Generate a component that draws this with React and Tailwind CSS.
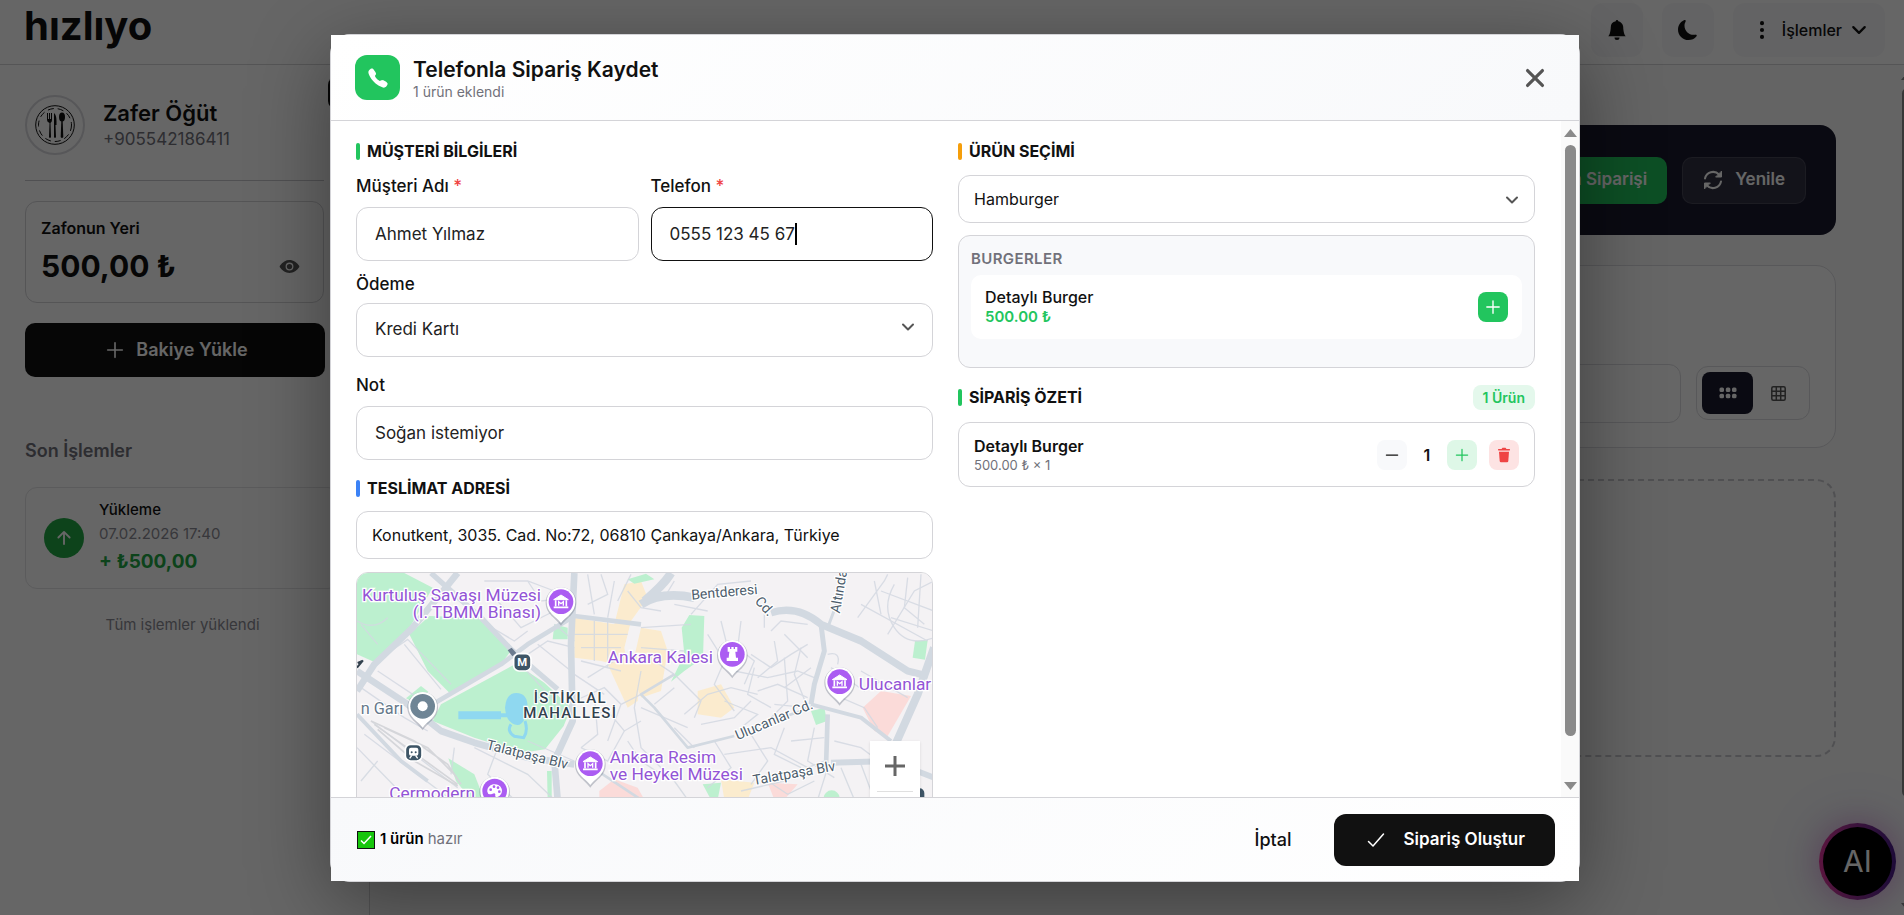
import React from "react";
import { IoAdd, IoArrowUp, IoCall, IoCheckmark, IoClose, IoEye, IoRemove } from "react-icons/io5";
import { BsBellFill, BsMoonFill, BsThreeDotsVertical } from "react-icons/bs";

function Chevron({ className }) {
  return (
    <svg viewBox="0 0 14 14" className={className} aria-hidden="true">
      <path d="M2 4.500 7 9.500 12 4.500" fill="none" stroke="currentColor" strokeWidth="2" strokeLinecap="round" strokeLinejoin="round" />
    </svg>
  );
}

function RefreshIcon() {
  return (
    <svg viewBox="0 0 20 20" className="size-5" fill="none" stroke="currentColor" strokeWidth="2" strokeLinecap="round" aria-hidden="true">
      <path d="M2 8.500A8.200 8.200 0 0 1 16 4.500M18 11.500A8.200 8.200 0 0 1 4 15.500" />
      <path d="M18.500 1.500V7H13z" fill="currentColor" strokeWidth="1" strokeLinejoin="round" />
      <path d="M1.500 18.500V13H7z" fill="currentColor" strokeWidth="1" strokeLinejoin="round" />
    </svg>
  );
}

function DotsGridIcon() {
  return (
    <svg viewBox="0 0 18 12" className="h-3 w-[18px]" fill="currentColor" aria-hidden="true">
      {[0.5, 6.8, 13].map((x) => (
        <g key={x}>
          <rect x={x} y=".5" width="4.500" height="4.500" rx="1.500" />
          <rect x={x} y="6.800" width="4.500" height="4.500" rx="1.500" />
        </g>
      ))}
    </svg>
  );
}

function TableGridIcon() {
  return (
    <svg viewBox="0 0 15 15" className="size-[15px]" fill="none" stroke="currentColor" strokeWidth="1.500" aria-hidden="true">
      <rect x=".8" y=".8" width="13.400" height="13.400" rx="1.500" />
      <path d="M5.300 1V14M9.700 1V14M1 5.300H14M1 9.700H14" />
    </svg>
  );
}

function TrashIcon() {
  return (
    <svg viewBox="0 0 14 16" className="h-4 w-[14px]" fill="currentColor" aria-hidden="true">
      <path d="M4.500 2 5.500.8H8.500L9.500 2H12.500Q13 2 13 2.800T12.500 3.600H1.500Q1 3.600 1 2.800T1.500 2z" />
      <path d="M2 4.800H12L11.300 14Q11.200 15.200 10 15.200H4Q2.800 15.200 2.700 14z" />
    </svg>
  );
}

function PlateLogo() {
  return (
    <svg viewBox="0 0 60 60" className="size-[60px]" aria-hidden="true">
      <circle cx="30" cy="30" r="29" fill="none" stroke="#d9d9de" strokeWidth="2" />
      <circle cx="30" cy="30" r="19.3" fill="none" stroke="#111" strokeWidth="1" />
      <circle cx="30" cy="30" r="16.5" fill="none" stroke="#111" strokeWidth="1" strokeDasharray="6 4" />
      <g fill="#111" stroke="none">
        <path d="M22 18h1v6h1v-6h1v6h1v-6h1v7q0 2-1.500 3l.5 14q-1 2-2 0l.5-14Q22 27 22 25z" />
        <path d="M29 18q2.500 2 2.500 8v4h-1l.5 12q-1 2-2 0z" />
        <ellipse cx="37" cy="22" rx="3" ry="4.500" />
        <path d="M36.300 26h1.400l.6 16q-1.300 2-2.600 0z" />
      </g>
    </svg>
  );
}

function Topbar() {
  return (
    <header className="flex h-[65px] shrink-0 items-start justify-between border-b border-[#d4d4d8] bg-white pl-6 pr-[19px] pt-[3px]">
      <a href="#" className="text-[40px] font-bold leading-[46px] text-[#111]">
        hızlıyo
      </a>
      <div className="flex gap-[19px]">
        <button aria-label="Bildirimler" className="flex h-[54px] w-[52px] items-center justify-center rounded-xl bg-[#f8f8f9] text-[#111]">
          <BsBellFill size={20} />
        </button>
        <button aria-label="Koyu tema" className="flex h-[54px] w-[52px] items-center justify-center rounded-xl bg-[#f8f8f9] text-[#111]">
          <BsMoonFill size={20} />
        </button>
        <button className="flex h-[54px] items-center gap-[9px] rounded-xl bg-[#f8f8f9] px-[18px] text-base font-medium text-[#111]">
          <BsThreeDotsVertical size={22} />
          İşlemler
          <Chevron className="size-4" />
        </button>
      </div>
    </header>
  );
}

function Sidebar() {
  return (
    <aside className="relative w-[370px] shrink-0 border-r border-[#d4d4d8] bg-white pl-[25px] pr-[29px] pt-[30px]">
      <div className="absolute left-[328px] top-3 h-8 w-8 rounded-lg bg-[#111]" />
      <div className="mr-4 flex items-center gap-[18px] border-b border-[#c8c8cc] pb-[25px]">
        <PlateLogo />
        <div>
          <h2 className="text-[22px] font-semibold leading-7 text-[#111]">Zafer Öğüt</h2>
          <p className="text-[17px] leading-6 text-[#71717a]">+905542186411</p>
        </div>
      </div>
      <section className="mr-4 mt-5 rounded-xl border border-[#d4d4d8] py-[14px] pl-[15px] pr-3">
        <h3 className="text-base font-semibold leading-6 text-[#111]">Zafonun Yeri</h3>
        <div className="mt-1 flex items-center justify-between">
          <p className="text-[30px] font-bold leading-9 text-[#111]">500,00 ₺</p>
          <button aria-label="Bakiyeyi gizle" className="flex size-11 items-center justify-center rounded-lg text-[#555]">
            <IoEye size={21} />
          </button>
        </div>
      </section>
      <button className="mt-5 flex h-[54px] w-[300px] items-center justify-center gap-2 rounded-[10px] bg-[#111] text-lg font-semibold text-white">
        <IoAdd size={26} />
        Bakiye Yükle
      </button>
      <h3 className="mt-[62px] text-lg font-semibold leading-6 text-[#71717a]">Son İşlemler</h3>
      <div className="mt-6 flex h-[102px] items-center gap-[15px] rounded-xl border border-[#e4e4e7] pl-[18px]">
        <span className="flex size-10 items-center justify-center rounded-full bg-[#22a745] text-white">
          <IoArrowUp size={20} />
        </span>
        <div>
          <p className="text-[15px] font-medium leading-6 text-[#111]">Yükleme</p>
          <p className="text-[15px] leading-6 text-[#8b8b93]">07.02.2026 17:40</p>
          <p className="text-[19px] font-bold leading-8 text-[#22a745]">+ ₺500,00</p>
        </div>
      </div>
      <p className="mt-6 text-center text-[15px] leading-6 text-[#8b8b93]">Tüm işlemler yüklendi</p>
    </aside>
  );
}

function Main() {
  return (
    <main className="min-w-0 flex-1 bg-[#fafafa] pl-[68px] pr-[68px] pt-[60px]">
      <div className="flex h-[110px] items-center justify-end gap-[15px] rounded-2xl bg-[#1a1a2e] px-[30px] text-[17px] font-semibold text-white">
        <button className="flex h-[47px] items-center gap-3 rounded-[10px] bg-[#22c55e] px-5">
          <IoCall size={20} />
          Telefon Siparişi
        </button>
        <button className="flex h-[47px] items-center gap-3 rounded-[10px] border border-white/10 bg-white/10 px-5">
          <RefreshIcon />
          Yenile
        </button>
      </div>
      <div className="mt-[30px] flex h-[183px] items-end gap-[15px] rounded-[20px] border border-[#dcdce0] bg-white pb-6 pl-6 pr-[25px]">
        <input aria-label="Ara" className="h-[59px] min-w-0 flex-1 rounded-xl border border-[#dcdce0]" />
        <div className="mb-[3px] flex h-[54px] items-center rounded-xl border border-[#dcdce0] px-[5px]">
          <button aria-label="Geniş görünüm" className="flex h-[42px] w-[51px] items-center justify-center rounded-lg bg-[#1a1a2e] text-white">
            <DotsGridIcon />
          </button>
          <button aria-label="Sık görünüm" className="flex h-[42px] w-[51px] items-center justify-center text-[#555]">
            <TableGridIcon />
          </button>
        </div>
      </div>
      <div className="mt-[31px] h-[278px] rounded-[20px] border-2 border-dashed border-[#c8c8ce]" />
    </main>
  );
}

function Pin({ x, y, color, children }) {
  return (
    <g transform={"translate(" + x + " " + y + ")"}>
      <path d="M0 72C-14 50-46 38-46 3A46 46 0 1 1 46 3C46 38 14 50 0 72z" fill="#5f6b7a" opacity=".35" />
      <path d="M0 64C-14 44-43 34-43 0A43 43 0 1 1 43 0C43 34 14 44 0 64z" fill="#fff" />
      <circle r="37" fill={color} />
      {children}
    </g>
  );
}

function MuseumGlyph() {
  return (
    <g fill="none" stroke="#fff">
      <path d="M-22-6 0-20 22-6z" fill="#fff" strokeWidth="3" />
      <path d="M-16-4V14M16-4V14M-22 17H22" strokeWidth="5" />
      <path d="M-7 12V0l7 6 7-6v12" strokeWidth="4" />
    </g>
  );
}

const minorRoads = [
  "M48 180Q100 210 140 170M60 190 110 250M190 250 300 385M150 270 200 235 330 370M110 330 230 410",
  "M420 180 520 240 560 210M470 120 540 200 640 150M560 60 600 120 690 110M430 60 560 60 640 90",
  "M60 380 190 470 260 510M90 480 350 680M70 520 330 716M110 600 60 660M48 560 200 716",
  "M400 560 560 640 640 716M470 560 440 640 520 716M340 560 330 640M560 540 700 600",
  "M530 300 640 420 690 470M590 250 690 330M560 280 620 240 700 260M640 190 700 240",
  "M740 40 760 160M780 40 800 100 740 130M820 60 800 170M860 90 900 140 960 150M870 40 830 120",
  "M700 220H860M720 260H840M760 180V300M800 170V320M720 300 840 330M740 350 820 300M700 340 790 400",
  "M700 420 790 380 840 430 900 400M730 470 800 450 850 510 900 480M840 430 800 540M760 400 770 520 720 560",
  "M850 510 800 600 720 560M860 540 900 600 960 640M900 330 880 440 900 560 1000 660 1040 716",
  "M900 200 1050 190M900 260 1030 270M910 120 970 110 1000 60M1050 160 1130 70 1230 60M1000 130 1100 150",
  "M940 300 1000 340 1080 420 1060 470M1000 380 940 430M1030 460 1100 400 1170 380 1250 400",
  "M1100 220 1150 300 1120 370 1180 450M1140 180 1160 260M1200 180 1190 260 1240 300 1210 370M1270 110V200",
  "M1230 280 1290 320 1350 280 1400 250M1180 330 1280 350 1370 330 1420 350M1250 390 1310 370 1400 410",
  "M1240 320 1220 400 1290 440M1330 290 1340 420 1290 470M1380 260 1360 340 1400 440 1300 430M1290 210 1320 180 1400 190",
  "M1330 220 1400 290M1250 350 1310 300 1300 240M1410 320 1330 380M1150 420 1250 460 1200 500M1080 490 1180 470 1230 420",
  "M1460 280Q1500 270 1490 310M1470 320 1570 390 1620 360M1500 410 1570 440 1610 500M1560 330 1700 410",
  "M1550 170 1630 60 1640 40M1600 60 1620 160M1640 220 1720 90 1779 60M1620 90 1779 150M1650 170 1779 210",
  "M1660 70Q1620 140 1660 200T1779 230M1700 50 1690 140 1750 190M1740 40 1730 200M1560 130 1760 240",
  "M1120 540 1170 620 1100 680M1040 500 900 440M1060 560 1000 500M1230 520 1280 600 1230 670M1330 500 1300 580 1380 620",
  "M1150 580 1290 560 1400 620 1450 600M1350 540 1450 530M1420 500 1400 600 1480 650M1480 540 1560 560 1640 620",
  "M1500 620 1540 716M1560 610 1600 716M1280 660 1340 700 1420 660M1200 690 1330 660M1460 620 1430 716",
];

function CityMap() {
  return (
    <svg
      viewBox="48 36 1731 1200"
      preserveAspectRatio="xMinYMin slice"
      className="block h-[400px] w-full"
      fontFamily="Roboto, 'Liberation Sans', sans-serif"
      role="img"
      aria-label="Harita"
    >
      <rect x="0" y="0" width="2000" height="1300" fill="#f4f2f4" />
      <g fill="#fbecce">
        <path d="M700 170 820 190 850 70 900 60 920 110 870 180 850 260 860 320 780 300 700 290z" />
        <path d="M900 200 960 210 980 270 960 390 900 410 870 330z" />
        <path d="M800 310 900 300 890 420 860 440z" />
        <path d="M1070 390 1140 370 1180 440 1140 470 1070 460z" />
        <path d="M1140 655 1240 665 1220 716H1150z" />
      </g>
      <g fill="#fbdbd9">
        <path d="M1565 440 1620 390 1710 405 1640 525 1600 510z" />
        <path d="M775 690 820 655 890 680 910 716H775z" />
        <path d="M1280 665 1370 670 1330 716H1300z" />
      </g>
      <g fill="#bdf0cf">
        <path d="M48 36H190L275 80 200 210 105 305 48 280z" />
        <path d="M205 220 265 165 425 170 515 262 480 310 325 395 260 330z" />
        <path d="M525 308 610 365 690 440 668 495 612 565 545 575 400 530 275 480 300 430z" />
        <path d="M195 412 240 375 262 392 230 430z" />
        <path d="M322 592 400 640 430 716H390L345 660z" />
        <path d="M640 190 680 200V235H635z" />
        <path d="M1022 200 1045 162 1090 165 1086 290 1030 330 990 362 1030 280z" />
        <path d="M1722 240 1760 238 1752 296 1715 290z" />
        <path d="M1410 450 1450 440 1458 480 1425 492z" />
        <path d="M860 55 915 38 940 55 880 68z" />
        <path d="M618 630H632V716H620z" />
        <path d="M1085 670 1140 665 1130 716H1110z" />
        <circle cx="1472" cy="712" r="24" />
      </g>
      <g fill="none" stroke="#d3d9e1" strokeWidth="4" opacity=".85">
        {minorRoads.map((d) => (
          <path key={d} d={d} />
        ))}
      </g>
      <g fill="none" stroke="#d2d9e1" strokeLinejoin="round">
        <path d="M48 390 100 310 215 200 290 110 350 36" strokeWidth="20" />
        <path d="M270 36 420 170 510 265 650 385" strokeWidth="16" />
        <path d="M48 330 200 430 300 510 400 545 560 590 700 610" strokeWidth="20" />
        <path d="M275 430 480 310 560 250 700 165 900 190" strokeWidth="14" />
        <path d="M700 36 690 250 695 480 640 600 650 716" strokeWidth="20" />
        <path d="M910 120Q970 70 990 36M900 130Q960 90 1060 110" strokeWidth="26" />
        <path d="M1290 155Q1370 130 1440 190L1560 240 1700 330 1760 345" strokeWidth="22" />
        <path d="M1440 190 1450 270 1420 370 1410 430" strokeWidth="15" />
        <path d="M1410 430 1560 470 1650 540" strokeWidth="12" />
        <path d="M1460 460 1455 620" strokeWidth="14" />
        <path d="M1779 260 1730 400 1650 580" strokeWidth="24" />
        <path d="M1779 650 1650 600 1470 605" strokeWidth="18" />
        <path d="M1000 340 900 400 940 440 1040 560 1180 525M1320 470 1410 440" strokeWidth="8" />
        <path d="M1460 200 1490 120 1500 36" strokeWidth="9" />
        <path d="M48 460 180 600 260 660" strokeWidth="12" />
        <path d="M740 610 900 716" strokeWidth="8" />
      </g>
      <g fill="none" stroke="#d5d6da" strokeWidth="5">
        <path d="M90 480 220 540 320 610 360 670M100 490 240 590 350 670M110 505 220 600 350 675M130 500 260 560 340 640" />
      </g>
      <g fill="none" stroke="#8fd8f0">
        <path d="M352 463H480" strokeWidth="24" />
        <path d="M470 463H500" strokeWidth="12" />
        <path d="M526 396Q560 396 560 440 552 490 530 492 496 490 492 440 496 396 526 396z" fill="#8fd8f0" stroke="none" />
        <path d="M510 490Q496 510 520 526L548 530Q562 510 552 480" strokeWidth="9" />
      </g>
      <path d="M500 268 512 260 526 276 514 286z" fill="#6b7b8f" />
      <path d="M48 320 66 298M50 306 64 300" stroke="#33414e" strokeWidth="6" />
      <g fill="#9354d6" stroke="#fff" strokeWidth="8" paintOrder="stroke" fontSize="52">
        <text x="600" y="120" textAnchor="end">Kurtuluş Savaşı Müzesi</text>
        <text x="600" y="172" textAnchor="end">(I. TBMM Binası)</text>
        <text x="1116" y="305" textAnchor="end">Ankara Kalesi</text>
        <text x="1553" y="388">Ulucanlar</text>
        <text x="806" y="606">Ankara Resim</text>
        <text x="806" y="658">ve Heykel Müzesi</text>
        <text x="402" y="714" textAnchor="end">Cermodern</text>
      </g>
      <g fill="#33414e" stroke="#fff" strokeWidth="7" paintOrder="stroke">
        <text x="187" y="459" fontSize="49" textAnchor="end" fill="#66788a">n Garı</text>
        <text x="688" y="425" fontSize="45" fontWeight="500" letterSpacing="4" textAnchor="middle">İSTİKLAL</text>
        <text x="688" y="471" fontSize="45" fontWeight="500" letterSpacing="4" textAnchor="middle">MAHALLESİ</text>
        <text fontSize="42" fill="#4c5c6b" transform="translate(434 564) rotate(14)">Talatpaşa Blv</text>
        <text fontSize="42" fill="#4c5c6b" transform="translate(1052 116) rotate(-5)">Bentderesi</text>
        <text fontSize="42" fill="#4c5c6b" transform="translate(1240 122) rotate(48)">Cd.</text>
        <text fontSize="42" fill="#4c5c6b" transform="translate(1496 158) rotate(-80)">Altında</text>
        <text fontSize="42" fill="#4c5c6b" transform="translate(1190 538) rotate(-23)">Ulucanlar Cd.</text>
        <text fontSize="42" fill="#4c5c6b" transform="translate(1238 672) rotate(-10)">Talatpaşa Blv</text>
      </g>
      <Pin x={660} y={122} color="#ab5cf2"><MuseumGlyph /></Pin>
      <Pin x={748} y={608} color="#ab5cf2"><MuseumGlyph /></Pin>
      <Pin x={1496} y={362} color="#ab5cf2"><MuseumGlyph /></Pin>
      <Pin x={1174} y={280} color="#ab5cf2">
        <path d="M-14-22h7v6h4v-6h7v6h4v-6h7V-8H9L11 10H17V20H-17V10H-11L-9-8H-14z" fill="#fff" />
      </Pin>
      <Pin x={245} y={436} color="#6f8595"><circle r="15" fill="#fff" /></Pin>
      <Pin x={461} y={690} color="#ab5cf2">
        <path d="M-22 2A22 20 0 1 1 8 18Q0 20 2 10 0 4-6 8-20 14-22 2z" fill="#fff" />
        <g fill="#ab5cf2"><circle cx="-12" cy="-4" r="4" /><circle cx="-2" cy="-13" r="4" /><circle cx="10" cy="-10" r="4" /><circle cx="14" cy="2" r="4" /></g>
      </Pin>
      <g>
        <rect x="518" y="278" width="52" height="52" rx="16" fill="#3e5566" stroke="#fff" strokeWidth="5" />
        <text x="544" y="316" fontSize="34" fontWeight="700" fill="#fff" textAnchor="middle">M</text>
        <rect x="193" y="550" width="50" height="50" rx="16" fill="#3e5566" stroke="#fff" strokeWidth="5" />
        <rect x="204" y="560" width="28" height="24" rx="6" fill="#fff" />
        <path d="M206 592 212 584M230 592 224 584" stroke="#fff" strokeWidth="4" />
        <circle cx="212" cy="574" r="3" fill="#3e5566" />
        <circle cx="224" cy="574" r="3" fill="#3e5566" />
        <rect x="1700" y="682" width="50" height="50" rx="14" fill="#3e5566" />
      </g>
    </svg>
  );
}

function SectionTitle({ bar, children }) {
  return (
    <h3 className="flex h-6 items-center gap-[7px] text-base font-bold text-[#111]">
      <span className={"h-[17px] w-1 rounded-sm " + bar} />
      {children}
    </h3>
  );
}

function FieldLabel({ htmlFor, required, children }) {
  return (
    <label htmlFor={htmlFor} className="block text-[17px] font-medium leading-6 text-[#111]">
      {children}
      {required && <span className="text-[#ef4444]"> *</span>}
    </label>
  );
}

function CustomerColumn() {
  return (
    <div className="min-w-0">
      <SectionTitle bar="bg-[#22c55e]">MÜŞTERİ BİLGİLERİ</SectionTitle>
      <div className="mt-[11px] grid grid-cols-2 gap-3">
        <div>
          <FieldLabel htmlFor="name" required>Müşteri Adı</FieldLabel>
          <input id="name" defaultValue="Ahmet Yılmaz" className="mt-[9px] h-[54px] w-full rounded-xl border border-[#d4d4d8] bg-white px-[18px] text-[17px] text-[#222] outline-none" />
        </div>
        <div>
          <FieldLabel htmlFor="phone" required>Telefon</FieldLabel>
          <div className="relative mt-[9px]">
            <input id="phone" defaultValue="0555 123 45 67" className="h-[54px] w-full rounded-xl border border-[#111] bg-white px-[18px] text-[17px] text-[#222] outline-none" />
            <span className="absolute left-[144px] top-4 h-[22px] w-0.5 bg-black" />
          </div>
        </div>
      </div>
      <div className="mt-[11px]">
        <FieldLabel htmlFor="payment">Ödeme</FieldLabel>
        <div className="relative mt-[7px]">
          <select id="payment" className="h-[54px] w-full appearance-none rounded-xl border border-[#d4d4d8] bg-white px-[18px] text-[17px] text-[#222] outline-none">
            <option>Kredi Kartı</option>
          </select>
          <Chevron className="pointer-events-none absolute right-[18px] top-[17px] size-[14px] text-[#555]" />
        </div>
      </div>
      <div className="mt-4">
        <FieldLabel htmlFor="note">Not</FieldLabel>
        <input id="note" defaultValue="Soğan istemiyor" className="mt-[9px] h-[54px] w-full rounded-xl border border-[#d4d4d8] bg-white px-[18px] text-[17px] text-[#222] outline-none" />
      </div>
      <div className="mt-4">
        <SectionTitle bar="bg-[#3b82f6]">TESLİMAT ADRESİ</SectionTitle>
        <input aria-label="Teslimat adresi" defaultValue="Konutkent, 3035. Cad. No:72, 06810 Çankaya/Ankara, Türkiye" className="mt-[11px] h-12 w-full rounded-xl border border-[#d4d4d8] bg-white px-[15px] text-base text-[#111] outline-none" />
        <div className="relative mt-[13px] overflow-hidden rounded-xl border border-[#d4d4d8]">
          <CityMap />
          <div className="absolute right-3 top-[168px] flex w-[50px] flex-col items-center bg-white shadow">
            <button aria-label="Yakınlaştır" className="flex h-[50px] w-full items-center justify-center text-[#666]">
              <svg viewBox="0 0 22 22" className="size-[22px]"><path d="M11 1V21M1 11H21" stroke="currentColor" strokeWidth="3" /></svg>
            </button>
            <span className="h-px w-9 bg-[#e0e0e0]" />
            <button aria-label="Uzaklaştır" className="flex h-[50px] w-full items-center justify-center text-[#666]">
              <svg viewBox="0 0 22 22" className="size-[22px]"><path d="M1 11H21" stroke="currentColor" strokeWidth="3" /></svg>
            </button>
          </div>
        </div>
      </div>
    </div>
  );
}

function ProductColumn() {
  return (
    <div className="min-w-0">
      <SectionTitle bar="bg-[#f59e0b]">ÜRÜN SEÇİMİ</SectionTitle>
      <div className="relative mt-3">
        <select aria-label="Ürün kategorisi" className="h-12 w-full appearance-none rounded-xl border border-[#d4d4d8] bg-white px-[15px] text-base text-[#111] outline-none">
          <option>Hamburger</option>
        </select>
        <Chevron className="pointer-events-none absolute right-4 top-[18px] size-[14px] text-[#555]" />
      </div>
      <div className="mt-3 rounded-xl border border-[#d4d4d8] bg-[#f8f9fb] px-3 pb-7 pt-[11px]">
        <h4 className="text-[15px] font-semibold leading-6 tracking-wide text-[#71717a]">BURGERLER</h4>
        <div className="mt-1 flex h-16 items-center justify-between rounded-[10px] bg-white px-[14px]">
          <div>
            <p className="text-base font-medium leading-5 text-[#111]">Detaylı Burger</p>
            <p className="text-[15px] font-semibold leading-5 text-[#22c55e]">500.00 ₺</p>
          </div>
          <button aria-label="Detaylı Burger ekle" className="flex size-[30px] items-center justify-center rounded-lg bg-[#22c55e] text-white">
            <IoAdd size={22} />
          </button>
        </div>
      </div>
      <div className="mt-4 flex h-[26px] items-center justify-between">
        <SectionTitle bar="bg-[#22c55e]">SİPARİŞ ÖZETİ</SectionTitle>
        <span className="rounded-lg bg-[#e4f8ec] px-[10px] text-sm font-semibold leading-[25px] text-[#22c55e]">1 Ürün</span>
      </div>
      <div className="mt-3 flex h-[65px] items-center justify-between rounded-xl border border-[#d4d4d8] bg-white px-[15px]">
        <div>
          <p className="text-base font-semibold leading-5 text-[#111]">Detaylı Burger</p>
          <p className="text-[13px] leading-[18px] text-[#71717a]">500.00 ₺ × 1</p>
        </div>
        <div className="flex items-center">
          <button aria-label="Azalt" className="flex size-[30px] items-center justify-center rounded-lg bg-[#f8f9fb] text-[#111]">
            <IoRemove size={20} />
          </button>
          <span className="w-10 text-center text-base font-semibold text-[#111]">1</span>
          <button aria-label="Artır" className="flex size-[30px] items-center justify-center rounded-lg bg-[#def7e7] text-[#22c55e]">
            <IoAdd size={20} />
          </button>
          <button aria-label="Sil" className="ml-3 flex size-[30px] items-center justify-center rounded-lg bg-[#fde3e3] text-[#ef4444]">
            <TrashIcon />
          </button>
        </div>
      </div>
    </div>
  );
}

function ScrollRail() {
  return (
    <div className="flex w-[18px] shrink-0 flex-col items-center bg-[#fafafa] pb-[7px] pt-2" aria-hidden="true">
      <svg viewBox="0 0 13 8" className="h-2 w-[13px]"><path d="M6.500 0 13 8H0z" fill="#8a8a8a" /></svg>
      <div className="mt-2 flex w-[11px] flex-1 flex-col pb-2">
        <div className="h-[94%] rounded-full bg-[#8a8a8a]" />
      </div>
      <svg viewBox="0 0 13 8" className="h-2 w-[13px]"><path d="M0 0H13L6.500 8z" fill="#8a8a8a" /></svg>
    </div>
  );
}

function OrderDialog() {
  return (
    <div
      role="dialog"
      aria-labelledby="dialog-title"
      className="flex h-full max-h-[848px] w-full max-w-[1250px] flex-col rounded-[20px] border border-[#d4d4d8] bg-white shadow-[0_20px_80px_rgba(0,0,0,0.4)]"
    >
      <div className="flex h-[86px] shrink-0 items-center justify-between border-b border-[#d4d4d8] bg-linear-135 from-white to-[#f8f9fb] px-6">
        <div className="flex items-center gap-[13px]">
          <span className="flex size-[45px] items-center justify-center rounded-xl bg-[#22c55e] text-white">
            <IoCall size={22} />
          </span>
          <div className="pt-0.5">
            <h2 id="dialog-title" className="text-[21px] font-semibold leading-[26px] text-[#111]">Telefonla Sipariş Kaydet</h2>
            <p className="text-sm leading-[18px] text-[#71717a]">1 ürün eklendi</p>
          </div>
        </div>
        <button aria-label="Kapat" className="flex size-10 items-center justify-center text-[#555]">
          <IoClose size={34} />
        </button>
      </div>
      <div className="flex min-h-0 flex-1 overflow-hidden">
        <div className="grid min-w-0 flex-1 grid-cols-2 gap-[25px] pl-[25px] pr-[26px] pt-[18px]">
          <CustomerColumn />
          <ProductColumn />
        </div>
        <ScrollRail />
      </div>
      <div className="flex h-[84px] shrink-0 items-center justify-between border-t border-[#d4d4d8] bg-linear-135 from-[#f8f9fb] to-white px-6">
        <p className="flex items-center text-[15px] text-[#71717a]">
          <svg viewBox="0 0 18 18" className="ml-0.5 mr-[5px] size-[18px]" aria-hidden="true">
            <rect x=".5" y=".5" width="17" height="17" fill="#16c60c" stroke="#111" />
            <path d="M4 9.500 7 12.500 14 5" fill="none" stroke="#fff" strokeWidth="1.500" />
          </svg>
          <strong className="mr-1 font-semibold text-black">1 ürün</strong> hazır
        </p>
        <div className="flex items-center gap-3">
          <button className="h-[52px] px-[30px] text-lg font-medium text-[#111]">İptal</button>
          <button className="flex h-[52px] items-center gap-4 rounded-xl bg-[#111] px-[30px] text-[17px] font-semibold text-white">
            <IoCheckmark size={24} />
            Sipariş Oluştur
          </button>
        </div>
      </div>
    </div>
  );
}

export default function App() {
  return (
    <div className="relative h-screen overflow-hidden bg-white font-[Inter,'Liberation_Sans',sans-serif]">
      <div className="flex h-full flex-col">
        <Topbar />
        <div className="flex min-h-0 flex-1">
          <Sidebar />
          <Main />
        </div>
      </div>
      <div className="absolute -right-3 bottom-0 top-[65px] flex w-[18px] flex-col items-center pb-1 pt-[7px]" aria-hidden="true">
        <svg viewBox="0 0 13 8" className="h-2 w-[13px]"><path d="M6.500 0 13 8H0z" fill="#8a8a8a" /></svg>
        <div className="mt-2 flex w-[11px] flex-1 flex-col">
          <div className="h-[87%] rounded-full bg-[#8a8a8a]" />
        </div>
        <svg viewBox="0 0 13 8" className="h-2 w-[13px]"><path d="M0 0H13L6.500 8z" fill="#8a8a8a" /></svg>
      </div>
      <button className="absolute bottom-[15px] right-2 flex size-[77px] items-center justify-center rounded-full bg-linear-to-r from-[#e0349c] to-[#4a1a8c] p-1 shadow-[0_0_30px_rgba(200,60,180,0.4),0_0_70px_rgba(130,130,230,0.3)]">
        <span className="flex size-full items-center justify-center rounded-full bg-black text-[30px] text-white">AI</span>
      </button>
      <div className="absolute inset-0 flex items-center justify-center bg-black/60 pl-[6px] pt-px">
        <OrderDialog />
      </div>
    </div>
  );
}
